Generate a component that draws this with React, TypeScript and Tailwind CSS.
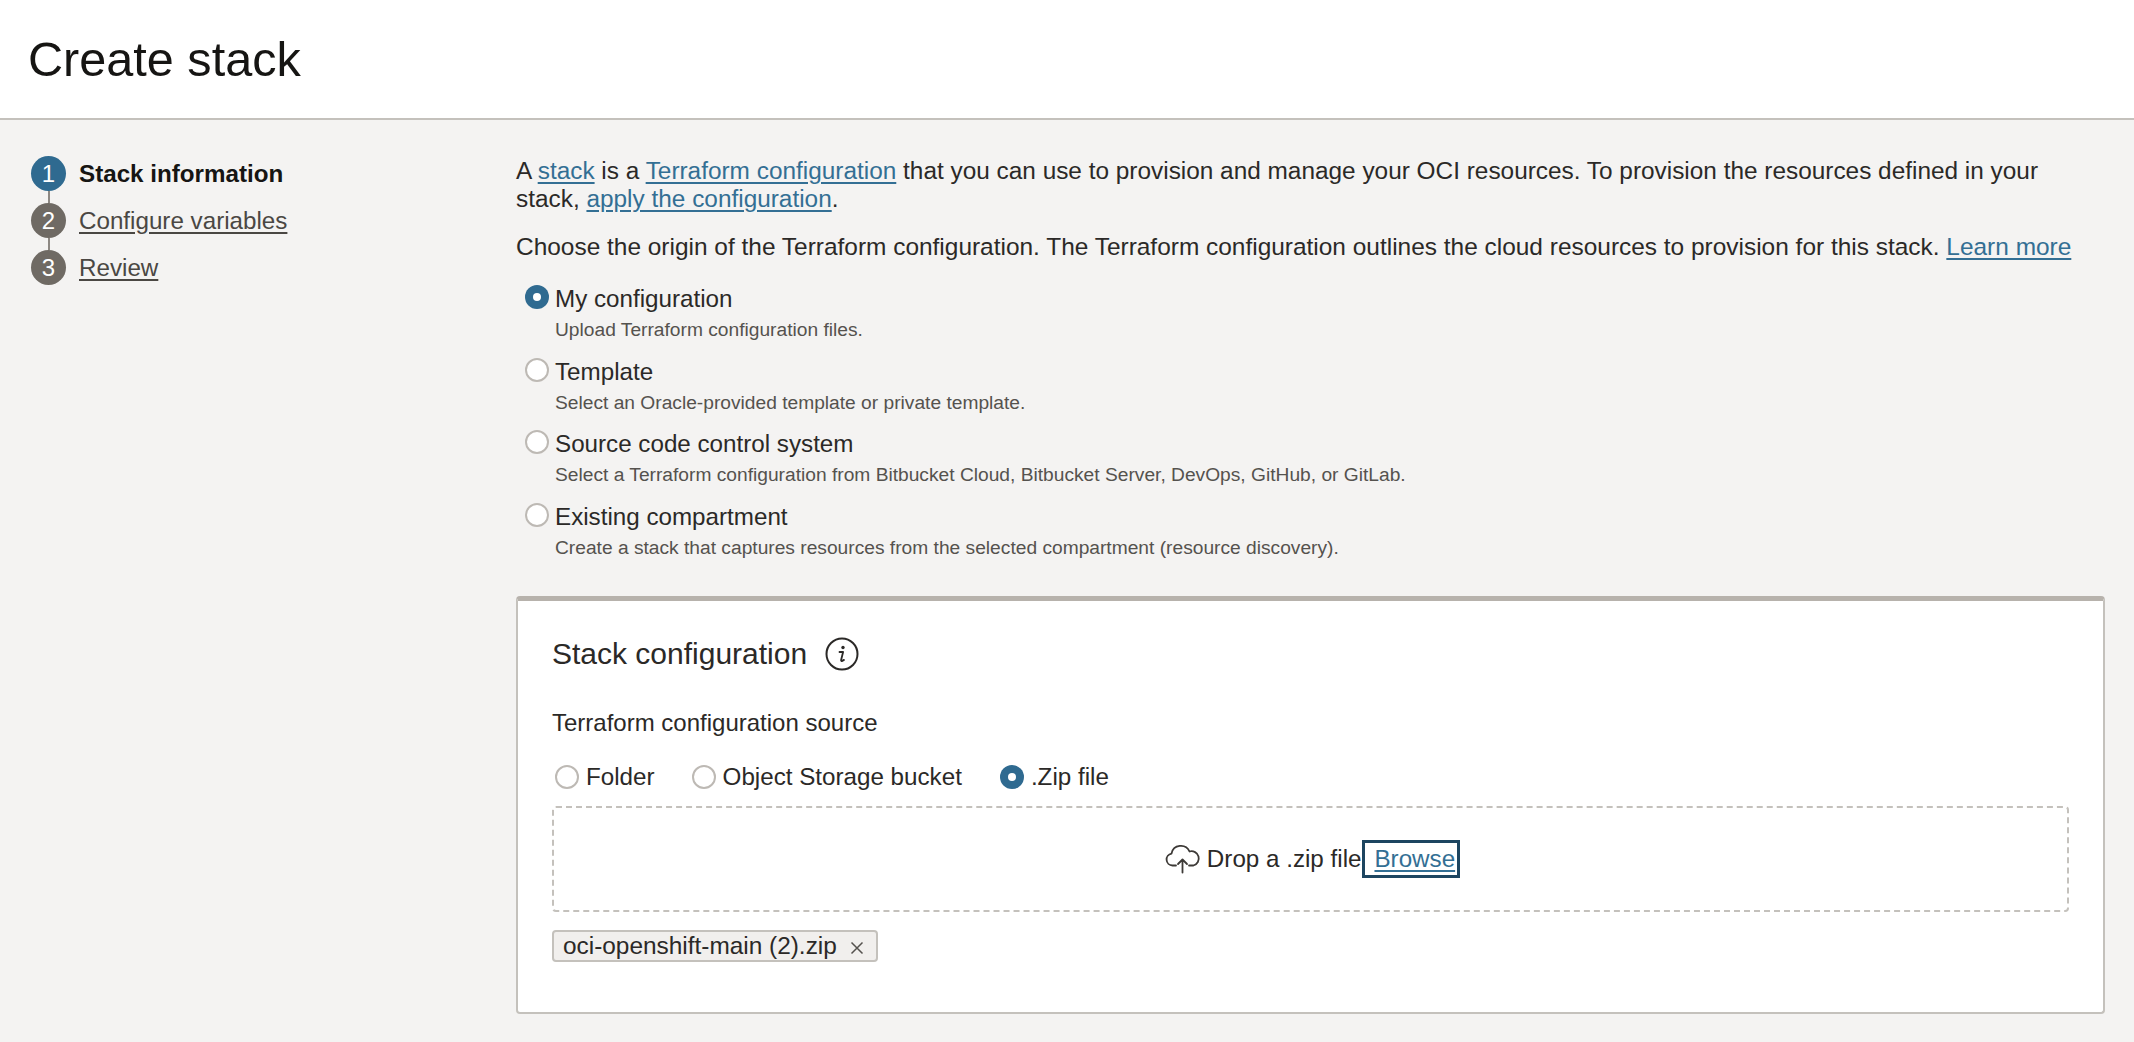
import React from 'react';

const FONT = "font-['Liberation_Sans',Arial,sans-serif]";

const steps = [
  { n: 1, label: 'Stack information', active: true },
  { n: 2, label: 'Configure variables', active: false },
  { n: 3, label: 'Review', active: false },
];

const origins = [
  { title: 'My configuration', desc: 'Upload Terraform configuration files.', checked: true },
  { title: 'Template', desc: 'Select an Oracle-provided template or private template.', checked: false },
  { title: 'Source code control system', desc: 'Select a Terraform configuration from Bitbucket Cloud, Bitbucket Server, DevOps, GitHub, or GitLab.', checked: false },
  { title: 'Existing compartment', desc: 'Create a stack that captures resources from the selected compartment (resource discovery).', checked: false },
];

const Radio: React.FC<{ checked?: boolean; className?: string }> = ({ checked, className = '' }) =>
  checked ? (
    <span className={`flex h-[24px] w-[24px] shrink-0 items-center justify-center rounded-full bg-[#2f6a90] ${className}`}>
      <span className="h-[8px] w-[8px] rounded-full bg-white" />
    </span>
  ) : (
    <span className={`block h-[24px] w-[24px] shrink-0 rounded-full border-2 border-[#bdb9b4] bg-white ${className}`} />
  );

const Link: React.FC<{ children: React.ReactNode }> = ({ children }) => (
  <a className="text-[#336f94] underline underline-offset-[3px]">{children}</a>
);

export default function App() {
  return (
    <div className={`${FONT} min-h-screen bg-[#f4f3f2] text-[24.2px] leading-[28px] text-[#2b2927]`}>
      <header className="flex h-[120px] items-center border-b-2 border-[#c4c1bc] bg-white pl-[28px]">
        <h1 className="text-[48.6px] leading-[56px] text-[#161513]">Create stack</h1>
      </header>

      <div className="flex">
        <nav className="w-[516px] shrink-0 pl-[31px] pt-[36px]">
          {steps.map((s, i) => (
            <div key={s.n}>
              <div className="flex items-center">
                <span className={`flex h-[35px] w-[35px] items-center justify-center rounded-full text-[24px] text-white ${s.active ? 'bg-[#2f6a90]' : 'bg-[#6f6a64]'}`}>
                  {s.n}
                </span>
                <span className={s.active ? 'ml-[13px] font-bold text-[#161513]' : 'ml-[13px] text-[#4a4743] underline underline-offset-[3px]'}>
                  {s.label}
                </span>
              </div>
              {i < steps.length - 1 && <div className="ml-[16.5px] h-[12px] w-[2px] bg-[#8d8883]" />}
            </div>
          ))}
        </nav>

        <main className="min-w-0 flex-1 pr-[29px] pt-[37px]">
          <p className="text-[24.38px]">
            A <Link>stack</Link> is a <Link>Terraform configuration</Link> that you can use to provision and manage your OCI resources. To provision the resources defined in your
            <br />
            stack, <Link>apply the configuration</Link>.
          </p>
          <p className="mt-[20px] text-[24.45px]">
            Choose the origin of the Terraform configuration. The Terraform configuration outlines the cloud resources to provision for this stack. <Link>Learn more</Link>
          </p>

          <div className="mt-[24px] flex flex-col gap-[15.7px] pl-[9px]">
            {origins.map((o) => (
              <div key={o.title}>
                <div className="flex h-[28px] items-center gap-[6px]">
                  <Radio checked={o.checked} className="-mt-[4px]" />
                  <span>{o.title}</span>
                </div>
                <div className="mt-[5px] pl-[30px] text-[19.2px] leading-[24px] text-[#55524e]">{o.desc}</div>
              </div>
            ))}
          </div>

          <section className="mt-[36px] rounded-[4px] border-x-2 border-b-2 border-t-[5px] border-x-[#c4c1bc] border-b-[#c4c1bc] border-t-[#b7b2ac] bg-white pb-[50px] pl-[34px] pr-[34px] pt-[35px]">
            <div className="flex h-[35px] items-center">
              <h2 className="text-[30px] leading-[35px] text-[#2b2927]">Stack configuration</h2>
              <svg className="ml-[18px]" width="34" height="34" viewBox="0 0 34 34" fill="none">
                <circle cx="17" cy="17" r="15.5" stroke="#2b2927" strokeWidth="2" />
                <circle cx="18" cy="10.5" r="1.7" fill="#2b2927" />
                <path d="M14.5 15h3.6l-2 8c-.2.9.5 1.2 1.2.9l1.7-1" stroke="#2b2927" strokeWidth="1.8" strokeLinecap="round" strokeLinejoin="round" />
              </svg>
            </div>

            <div className="mt-[38px] text-[24px]">Terraform configuration source</div>

            <div className="mt-[26px] flex h-[28px] items-center pl-[3px]">
              <Radio />
              <span className="ml-[7px]">Folder</span>
              <Radio className="ml-[37px]" />
              <span className="ml-[7px]">Object Storage bucket</span>
              <Radio checked className="ml-[38px]" />
              <span className="ml-[7px]">.Zip file</span>
            </div>

            <div className="mt-[15px] flex h-[106px] items-center justify-center rounded-[4px] border-2 border-dashed border-[#c4c1bc] pl-[4px]">
              <svg width="36" height="30" viewBox="0 0 36 30" fill="none" stroke="#3d3a37" strokeWidth="1.8" strokeLinecap="round" strokeLinejoin="round">
                <path d="M11 21.5H7.5a6 6 0 0 1-1-11.9A9.5 9.5 0 0 1 24.5 7.5a6.7 6.7 0 0 1 4 14H24" />
                <path d="M17.500 28.500V16M13 20l4.500-4.500L22 20" />
              </svg>
              <span className="ml-[6px]">Drop a .zip file</span>
              <span className="ml-[1px] flex h-[38px] items-center border-[3px] border-[#1d4560] pl-[9px] pr-[2px]">
                <Link>Browse</Link>
              </span>
            </div>

            <div className="mt-[18px] inline-flex h-[32px] items-center rounded-[4px] border-2 border-[#c4c1bc] bg-[#f1efed] pl-[9px] pr-[12px] text-[24.4px] text-[#2b2927]">
              <span>oci-openshift-main (2).zip</span>
              <svg className="ml-[13px] mt-[3px]" width="14" height="14" viewBox="0 0 14 14" stroke="#55524e" strokeWidth="1.500">
                <path d="M1.500 1.500l11 11M12.500 1.500l-11 11" />
              </svg>
            </div>
          </section>
        </main>
      </div>
    </div>
  );
}
